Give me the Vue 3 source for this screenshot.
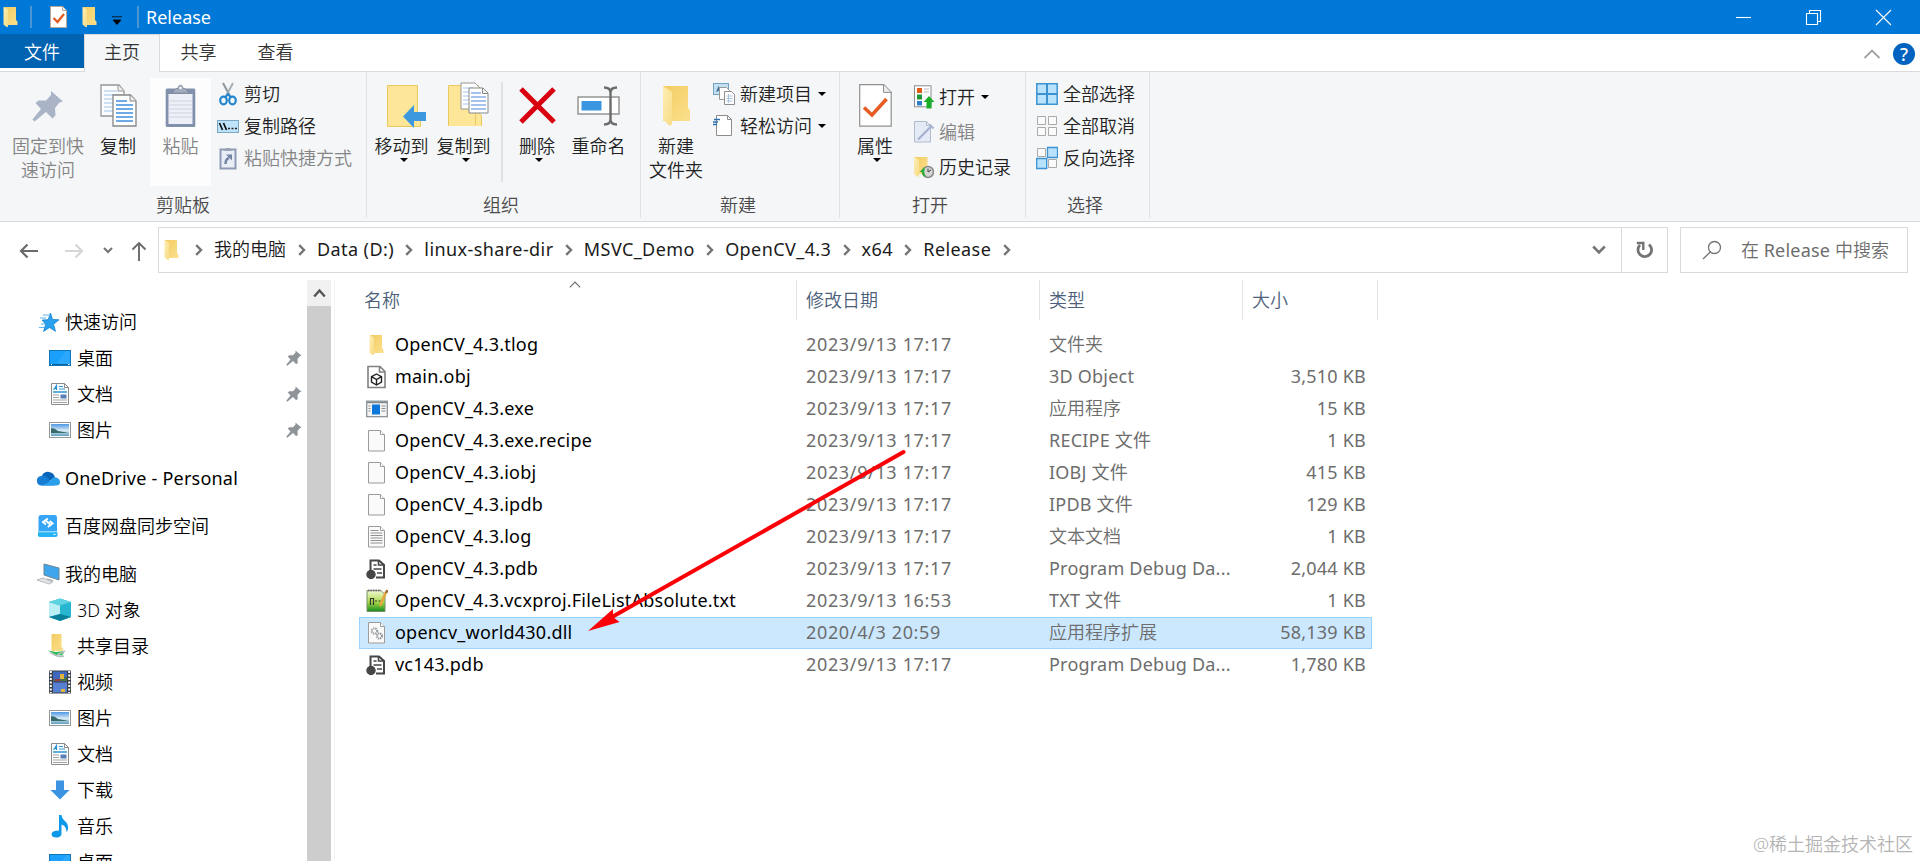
<script setup>
const tabs = ['主页', '共享', '查看']

const clipboardActions = [
  { icon: 'cut', label: '剪切' },
  { icon: 'path', label: '复制路径' },
  { icon: 'shortcut', label: '粘贴快捷方式', disabled: true },
]

const newActions = [
  { icon: 'new-item', label: '新建项目', menu: true },
  { icon: 'easy', label: '轻松访问', menu: true },
]

const openActions = [
  { icon: 'open', label: '打开', menu: true },
  { icon: 'edit', label: '编辑', disabled: true },
  { icon: 'history', label: '历史记录' },
]

const selectActions = [
  { icon: 'select-all', label: '全部选择' },
  { icon: 'select-none', label: '全部取消' },
  { icon: 'select-invert', label: '反向选择' },
]

const crumbs = ['我的电脑', 'Data (D:)', 'linux-share-dir', 'MSVC_Demo', 'OpenCV_4.3', 'x64', 'Release']

const tree = [
  { icon: 'star', label: '快速访问', root: true },
  { icon: 'desktop', label: '桌面', pinned: true },
  { icon: 'document', label: '文档', pinned: true },
  { icon: 'picture', label: '图片', pinned: true },
  { icon: 'onedrive', label: 'OneDrive - Personal', root: true, latin: true },
  { icon: 'netdisk', label: '百度网盘同步空间', root: true },
  { icon: 'computer', label: '我的电脑', root: true },
  { icon: 'cube', label: '3D 对象' },
  { icon: 'share', label: '共享目录' },
  { icon: 'video', label: '视频' },
  { icon: 'picture', label: '图片' },
  { icon: 'document', label: '文档' },
  { icon: 'download', label: '下载' },
  { icon: 'music', label: '音乐' },
  { icon: 'desktop', label: '桌面' },
]

const files = [
  { icon: 'folder', name: 'OpenCV_4.3.tlog', date: '2023/9/13 17:17', type: '文件夹', size: '' },
  { icon: 'obj', name: 'main.obj', date: '2023/9/13 17:17', type: '3D Object', size: '3,510 KB' },
  { icon: 'exe', name: 'OpenCV_4.3.exe', date: '2023/9/13 17:17', type: '应用程序', size: '15 KB' },
  { icon: 'file', name: 'OpenCV_4.3.exe.recipe', date: '2023/9/13 17:17', type: 'RECIPE 文件', size: '1 KB' },
  { icon: 'file', name: 'OpenCV_4.3.iobj', date: '2023/9/13 17:17', type: 'IOBJ 文件', size: '415 KB' },
  { icon: 'file', name: 'OpenCV_4.3.ipdb', date: '2023/9/13 17:17', type: 'IPDB 文件', size: '129 KB' },
  { icon: 'log', name: 'OpenCV_4.3.log', date: '2023/9/13 17:17', type: '文本文档', size: '1 KB' },
  { icon: 'pdb', name: 'OpenCV_4.3.pdb', date: '2023/9/13 17:17', type: 'Program Debug Da...', size: '2,044 KB' },
  { icon: 'txt', name: 'OpenCV_4.3.vcxproj.FileListAbsolute.txt', date: '2023/9/13 16:53', type: 'TXT 文件', size: '1 KB' },
  { icon: 'dll', name: 'opencv_world430.dll', date: '2020/4/3 20:59', type: '应用程序扩展', size: '58,139 KB', selected: true },
  { icon: 'pdb', name: 'vc143.pdb', date: '2023/9/13 17:17', type: 'Program Debug Da...', size: '1,780 KB' },
]
</script>

<template>
  <div class="explorer">
    <!-- icon sprite -->
    <svg class="sprite" width="0" height="0">
      <defs>
        <linearGradient id="g-folder" x1="0" y1="0" x2="1" y2="1">
          <stop offset="0" stop-color="#f3cc62" /><stop offset="1" stop-color="#fbe08d" />
        </linearGradient>
        <linearGradient id="g-flap" x1="0" y1="0" x2="1" y2="1">
          <stop offset="0" stop-color="#fdeeb4" /><stop offset="1" stop-color="#f8dc86" />
        </linearGradient>
        <linearGradient id="g-sky" x1="0" y1="0" x2="0" y2="1">
          <stop offset="0" stop-color="#4f97e6" /><stop offset="0.55" stop-color="#d9ecf4" /><stop offset="1" stop-color="#5d9dbd" />
        </linearGradient>
        <linearGradient id="g-green" x1="0" y1="0" x2="0" y2="1">
          <stop offset="0" stop-color="#f4f9d8" /><stop offset="0.55" stop-color="#a9d94a" /><stop offset="1" stop-color="#128a1c" />
        </linearGradient>
      </defs>
      <symbol id="folder" viewBox="0 0 22 22">
        <path d="M4 1h12v13l1.500 1.500v3.500H4z" fill="url(#g-folder)" />
        <path d="M3.500 1l4.500 2.500v17.500l-1.500 0-3-2.500z" fill="url(#g-flap)" />
      </symbol>
      <symbol id="check-doc" viewBox="0 0 17 22">
        <path d="M.5.5h12l4 4v17H.5z" fill="#fff" stroke="#b9a79a" />
        <path d="M12.500.5v4h4" fill="#eee" stroke="#b9a79a" />
        <path d="M3.500 12l4 4 6.500-8" fill="none" stroke="#e2581f" stroke-width="2.200" />
      </symbol>
      <symbol id="pushpin" viewBox="0 0 32 32">
        <path d="M19 1l12 10.500-3.500 1-4.500 5.500.5 7.500-3 3-6.500-6.500L2.500 31.500.5 29.500 9 19 3.500 13l3-2.500 7.500 0L19 5z" fill="currentColor" />
      </symbol>
      <symbol id="copy" viewBox="0 0 37 43">
        <path d="M1 1h18l5 6v25H1z" fill="#fbfcfe" stroke="#969696" stroke-width="1.300" />
        <path d="M4 7h13M4 11h17M4 15h17M4 19h9M4 23h9M4 27h9" stroke="#9fc1e6" stroke-width="1.200" />
        <path d="M18 1v6h6" fill="#eee" stroke="#969696" />
        <path d="M13 11h17.500l5.500 6v25H13z" fill="#fff" stroke="#868686" stroke-width="1.300" />
        <path d="M30 11v6h6" fill="#eee" stroke="#868686" />
        <path d="M16 17h11M16 21h17M16 25h17M16 29h17M16 33h17M16 37h17" stroke="#3f8ede" stroke-width="1.300" />
      </symbol>
      <symbol id="paste" viewBox="0 0 31 44">
        <rect x=".7" y="4.500" width="29.600" height="38.500" rx="1.500" fill="#8291ab" />
        <rect x="3.500" y="10" width="24" height="30" fill="#edf0f7" />
        <path d="M4 17h23M4 21h23M4 25h23M4 29h23M4 33h23" stroke="#cdd3e2" />
        <path d="M7 9l4-4.500h2c0-4.500 5-4.500 5 0h2L24 9z" fill="#a3adbd" stroke="#7f8a9b" stroke-width=".8" />
        <circle cx="15.500" cy="4" r="1.200" fill="#fff" />
      </symbol>
      <symbol id="cut" viewBox="0 0 22 24">
        <path d="M6 1l7.500 14" stroke="#8f979e" stroke-width="2" />
        <path d="M16 1L8.500 15" stroke="#a8b0b6" stroke-width="2" />
        <ellipse cx="6.500" cy="18.500" rx="3.300" ry="3.800" fill="none" stroke="#2387cc" stroke-width="2.200" />
        <ellipse cx="15.500" cy="18.500" rx="3.300" ry="3.800" fill="none" stroke="#2387cc" stroke-width="2.200" />
        <path d="M8 16l3-4 3 4" fill="none" stroke="#2387cc" stroke-width="2" />
      </symbol>
      <symbol id="path" viewBox="0 0 22 24">
        <rect x=".5" y="6.500" width="21" height="12" fill="#bfe3fb" stroke="#7ba6c4" />
        <path d="M2.500 9l3 7M6.500 9l3 7" stroke="#111" stroke-width="1.700" />
        <path d="M11 14.500h2M14.500 14.500h2M18 14.500h2" stroke="#222" stroke-width="1.500" />
      </symbol>
      <symbol id="shortcut" viewBox="0 0 22 24">
        <rect x="3.500" y="3.500" width="15" height="19" fill="#e8edf6" stroke="#8f9bb3" stroke-width="2" />
        <path d="M7 5l2-3h4l2 3z" fill="#9aa4b5" />
        <path d="M8.500 18q0-5 3.500-6" fill="none" stroke="#7184a3" stroke-width="2.500" />
        <path d="M9 8.500h6v6z" fill="#7184a3" />
      </symbol>
      <symbol id="move-to" viewBox="0 0 42 44">
        <path d="M3.500 1.500h30v27l3 3v11h-33z" fill="#fde698" stroke="#ecc95e" />
        <path d="M19 32.500L30 21v7h12v9H30v7z" fill="#3e98de" />
      </symbol>
      <symbol id="copy-to" viewBox="0 0 42 44">
        <path d="M1.500 3.500h30v27l3 3v11h-33z" fill="#fde698" stroke="#ecc95e" />
        <path d="M28.500 31v12" stroke="#ecc95e" />
        <path d="M14 1h14l5 5v21H14z" fill="#fff" stroke="#969696" />
        <path d="M16 6h10M16 10h10M16 14h10M16 18h10M16 22h10" stroke="#a4c4ec" />
        <path d="M22 6h14l5 5v20H22z" fill="#fff" stroke="#888" />
        <path d="M35.500 6v5.500H41" fill="#eee" stroke="#888" />
        <path d="M24 11h10M24 15h15M24 19h15M24 23h15M24 27h15" stroke="#4a86d8" stroke-width="1.200" />
      </symbol>
      <symbol id="delete" viewBox="0 0 37 44">
        <path d="M2 5l33 33M35 5L2 38" stroke="#d9000f" stroke-width="5" />
      </symbol>
      <symbol id="rename" viewBox="0 0 43 44">
        <rect x="1" y="13" width="41" height="17" fill="#fff" stroke="#8e8e8e" stroke-width="1.400" />
        <rect x="4.500" y="17" width="20" height="9.500" fill="#3a96e0" />
        <path d="M27 3.500q6.500 0 6.500 5v27q0 5-6.500 5M40 3.500q-6.500 0-6.500 5M33.500 35.500q0 5 6.500 5" fill="none" stroke="#6c6c6c" stroke-width="2.400" />
      </symbol>
      <symbol id="big-folder" viewBox="0 0 28 43">
        <path d="M1 2h25v22l2 2v11H1z" fill="url(#g-folder)" />
        <path d="M1 2l9 6v32l-2 2-7-6z" fill="url(#g-flap)" />
      </symbol>
      <symbol id="new-item" viewBox="0 0 22 24">
        <rect x=".5" y="1.500" width="15" height="11" fill="#c4dff2" stroke="#70a3c4" />
        <path d="M3 10l2.500-6L8 8z" fill="#41729a" />
        <path d="M6.500 5.500h7l3 3v9h-10z" fill="#fff" stroke="#9a9a9a" />
        <path d="M11.500 9.500h7l3 3v10h-10z" fill="#fff" stroke="#8d8d8d" />
        <path d="M13.500 14h6M13.500 16.500h6M13.500 19h6M15.500 12v9" stroke="#9ab8da" stroke-width=".8" />
      </symbol>
      <symbol id="easy" viewBox="0 0 22 24">
        <path d="M3.500 1.500h11l4 4v16h-15z" fill="#fff" stroke="#8c8c8c" />
        <path d="M14.500 1.500v4h4" fill="none" stroke="#8c8c8c" />
        <path d="M1 5.500h6M0 8h5M-1 10.500h5" stroke="#2c6fae" stroke-width="1.500" />
      </symbol>
      <symbol id="properties" viewBox="0 0 33 43">
        <path d="M.7.7h24l7.500 7.500v34H.7z" fill="#fff" stroke="#909090" stroke-width="1.200" />
        <path d="M24.500.7v7.700h7.700" fill="#ececec" stroke="#909090" />
        <path d="M5 23.500l8 7.500 14.500-16" fill="none" stroke="#e65c24" stroke-width="3.600" />
      </symbol>
      <symbol id="open" viewBox="0 0 22 24">
        <rect x="2.500" y=".8" width="16.500" height="21" fill="#fff" stroke="#8d8d8d" />
        <path d="M5 3h5v5H5z" fill="#df5a17" /><path d="M5 9.500h5v5H5z" fill="#21963a" /><path d="M5 16h5v4.500H5z" fill="#2d7fca" />
        <path d="M12 4h5M12 7h5" stroke="#bbb" />
        <path d="M17 11l5.500 6h-3v6.500h-5V17h-3z" fill="#18ae27" />
      </symbol>
      <symbol id="edit" viewBox="0 0 22 24">
        <path d="M2.500 1.500h12l4 4v16.500h-16z" fill="#e4eaf6" stroke="#b2bccd" />
        <path d="M14.500 1.500v4h4" fill="none" stroke="#b2bccd" />
        <path d="M6 19.500L19 6.500" stroke="#a3b0cb" stroke-width="2.200" />
        <path d="M17.500 4.500l4 4" stroke="#a6b3cc" stroke-width="2" />
      </symbol>
      <symbol id="history" viewBox="0 0 22 24">
        <path d="M2.500 2h13v17h-13z" fill="url(#g-folder)" />
        <path d="M2.500 2l4.500 3v17l-4.500-2z" fill="url(#g-flap)" />
        <circle cx="16" cy="17" r="5.500" fill="#d4d4d4" stroke="#8b8b8b" stroke-width="1.500" />
        <path d="M16 13.500V17l3-2" fill="none" stroke="#444" />
        <path d="M7.500 17l5-5v3q-1 3.500 2 7-5-1-4.500-5z" fill="#2bac38" />
      </symbol>
      <symbol id="select-all" viewBox="0 0 22 24">
        <path d="M.8 1.800h20.400v20.400H.8z" fill="#b9e2fc" stroke="#3d93d2" stroke-width="1.500" />
        <path d="M11 2v20M1 12h20" stroke="#3d93d2" stroke-width="2" />
      </symbol>
      <symbol id="select-none" viewBox="0 0 22 24">
        <path d="M1.500 2.500h8v8h-8zM12.500 2.500h8v8h-8zM1.500 13.500h8v8h-8zM12.500 13.500h8v8h-8z" fill="#fbfbfb" stroke="#aaa" />
      </symbol>
      <symbol id="select-invert" viewBox="0 0 22 24">
        <path d="M1.500 2.500h8v8h-8zM12.500 13.500h8v8h-8z" fill="#fbfbfb" stroke="#aaa" />
        <path d="M11.500 1.500h10v10h-10zM.7 12.500h10v10H.7z" fill="#b9e2fc" stroke="#3d93d2" stroke-width="1.300" />
      </symbol>
      <symbol id="star" viewBox="0 0 24 24">
        <path d="M14.500 3l2 6.500 6.500.3-5.500 4.500 2 7-6-3.800-6 4 2.200-7-3.500-4.500 6-.3z" fill="#2aa0ee" stroke="#1382cc" stroke-width=".8" />
        <path d="M7 5h6M4 8h6M5 14h4M3 17.500h5" stroke="#5bb6ef" stroke-width="1" />
      </symbol>
      <symbol id="desktop" viewBox="0 0 24 24">
        <rect x="1.500" y="4.500" width="21" height="15" fill="#1ba1fb" stroke="#0f76b9" />
        <path d="M2 18.500h20" stroke="#0c639d" stroke-width="1.200" />
        <path d="M3 18.500h1M20 18.500h1.500" stroke="#fff" />
        <path d="M9 18L18 5h4v13z" fill="#3cb0ff" opacity=".5" />
      </symbol>
      <symbol id="document" viewBox="0 0 24 24">
        <path d="M3.500 1.500h13l4 4v17h-17z" fill="#fff" stroke="#8b8b8b" />
        <path d="M16.500 1.500v4h4" fill="none" stroke="#8b8b8b" />
        <path d="M5.500 8L8.500 3.500V8M6.500 6.500h2M11 4.500h4M11 7h6" stroke="#2a93d3" stroke-width="1.200" fill="none" />
        <path d="M5 10h14" stroke="#2a93d3" stroke-width="1.500" />
        <path d="M5 13h6M5 15.500h6M5 18h14M5 20.500h14" stroke="#a0a0a0" />
        <path d="M12.500 12.500h6v4h-6z" fill="#587fb8" />
      </symbol>
      <symbol id="picture" viewBox="0 0 24 24">
        <rect x="1.500" y="4.500" width="21" height="15" fill="#fff" stroke="#8f979d" />
        <rect x="3" y="6" width="18" height="12" fill="url(#g-sky)" />
        <path d="M3 10q4 0 7 3l11 2H3z" fill="#3a6b6a" />
      </symbol>
      <symbol id="onedrive" viewBox="0 0 24 24">
        <path d="M6 9.500a7 7 0 0 1 13 2l-8 5z" fill="#0a64b8" />
        <path d="M5 10q5-1 8.500 4l5 5.500H5a4.800 4.800 0 0 1 0-9.500z" fill="#167dd4" />
        <path d="M5 19.500q8-2 11.500-7.500a5 5 0 0 1 7.500 4q0 3.500-4 3.500z" fill="#2ba0ea" />
      </symbol>
      <symbol id="netdisk" viewBox="0 0 24 24">
        <rect x="2.500" y="1" width="18.500" height="20" rx="2.500" fill="#36a5f6" />
        <rect x="2" y="17" width="19.500" height="6" rx="1.800" fill="#25b3f3" />
        <path d="M2.500 17.800h18.500" stroke="#b9e8ff" />
        <path d="M11.800 4.500L7 8l3 2.500M9.500 6.300l5 4.400M11.800 13l4.800-3.500-3-2.500" fill="none" stroke="#fff" stroke-width="1.900" />
        <path d="M17.500 20.500h2" stroke="#fff" />
      </symbol>
      <symbol id="computer" viewBox="0 0 24 24">
        <path d="M8 2l15 4v12L8 13z" fill="#3ea6ec" stroke="#6d8596" />
        <path d="M11 17l5 1.500-3 1.500" fill="none" stroke="#b5bcc2" stroke-width="1.500" />
        <path d="M1 18l6-2 10 4-4 2z" fill="#e2e5e8" stroke="#a9afb5" stroke-width=".8" />
      </symbol>
      <symbol id="cube" viewBox="0 0 24 24">
        <path d="M1 4l11-3.500L23 4v15l-11 4L1 19z" fill="#28b5cf" />
        <path d="M1 4l11 3.500V16L1 19z" fill="#baf0f5" />
        <path d="M1 4l11-3.500L23 4 12 7.500z" fill="#5dd2e1" />
        <path d="M1 19l11-3 11 3-11 4z" fill="#087f9b" />
      </symbol>
      <symbol id="share" viewBox="0 0 24 24">
        <path d="M3.500 0h10v13l1.500 1v3H3.500z" fill="url(#g-folder)" />
        <path d="M0 16.500l8 1.500 9-1-3 4.500-6-.5z" fill="#2dbd55" />
        <path d="M2 18q7 6 14 4M9 21l8-4" fill="none" stroke="#b4bfc2" stroke-width="1.500" />
      </symbol>
      <symbol id="video" viewBox="0 0 24 24">
        <rect x="1" y=".5" width="22" height="23" fill="#3a3e46" />
        <rect x="5" y="1.500" width="14" height="10" fill="#3f67bd" />
        <rect x="5" y="12.500" width="14" height="10" fill="#5680d2" />
        <path d="M2.800 1v22M21.200 1v22" stroke="#fff" stroke-width="2" stroke-dasharray="2 1.500" />
        <path d="M5 9q5 3 9 0l5-2v4H5z" fill="#49723d" />
        <path d="M12 4h4v5h-4zM13 19h4v3h-4z" fill="#e2b53a" />
        <path d="M7 10h5" stroke="#b82b23" stroke-width="1.500" />
      </symbol>
      <symbol id="download" viewBox="0 0 24 24">
        <path d="M8 2.500h8V12h5.500L12 21.500 2.500 12H8z" fill="#3b93e2" />
      </symbol>
      <symbol id="music" viewBox="0 0 24 24">
        <path d="M11 1h2.500q.5 4 4.500 7 4 4.500.5 10.500 0-6.500-5-8v9q0 3.500-4 4-5.500.5-6-3 0-4 7.500-4z" fill="#0e98ea" />
      </symbol>
      <symbol id="obj" viewBox="0 0 22 24">
        <path d="M2 1.500h12l5 5v16H2z" fill="#fff" stroke="#818181" stroke-width="1.600" />
        <path d="M13.500 1.500V7H19" fill="none" stroke="#818181" stroke-width="1.600" />
        <path d="M10.500 9l5 2.700v5.500L10.500 20l-5-2.800v-5.500zM5.500 11.700l5 2.800 5-2.800M10.500 14.500V20" fill="none" stroke="#222" stroke-width="1.400" />
      </symbol>
      <symbol id="exe" viewBox="0 0 22 24">
        <rect x=".7" y="4.200" width="20.600" height="15.500" fill="#f5f5f5" stroke="#838a90" stroke-width="1.200" />
        <path d="M1 5.500h20" stroke="#838a90" stroke-width="1.500" />
        <rect x="6" y="7.500" width="8" height="10" fill="#0d76d8" />
        <path d="M2.500 9h2M2.500 11.500h2M2.500 14h2M15.500 9h4M15.500 11.500h4M15.500 14h4" stroke="#8b8b8b" />
      </symbol>
      <symbol id="file" viewBox="0 0 22 24">
        <path d="M2.500 1.500h12l4 4v16.500h-16z" fill="#fafafa" stroke="#9b9b9b" />
        <path d="M14.500 1.500v4h4" fill="#fff" stroke="#9b9b9b" />
      </symbol>
      <symbol id="log" viewBox="0 0 22 24">
        <path d="M2.500 1.500h12l4 4v16.500h-16z" fill="#fafafa" stroke="#9b9b9b" />
        <path d="M14.500 1.500v4h4" fill="#fff" stroke="#9b9b9b" />
        <path d="M4.500 5.500h8M4.500 8h12M4.500 10.500h12M4.500 13h12M4.500 15.500h12M4.500 18h12" stroke="#909090" />
      </symbol>
      <symbol id="pdb" viewBox="0 0 22 24">
        <path d="M4.500 14V3.500H13L18 8v12.500h-8" fill="#fff" stroke="#464646" stroke-width="2" />
        <path d="M12.500 3.500V8H18M7.500 8h3M7.500 12h8M11 16h5" fill="none" stroke="#464646" stroke-width="1.600" />
        <circle cx="5" cy="17.500" r="4.700" fill="#464646" />
      </symbol>
      <symbol id="txt" viewBox="0 0 22 24">
        <path d="M1 1.500h14l4 4v17H1z" fill="url(#g-green)" stroke="#78906a" />
        <path d="M2 1.500h13" stroke="#777" stroke-dasharray="1.500 1" stroke-width="2" />
        <path d="M4.500 16V9.500h3V16M9 12h2M12.500 12h2" fill="none" stroke="#333" stroke-width="1.200" />
        <path d="M14 17L20 3" stroke="#e4a53b" stroke-width="2.500" />
        <path d="M20 4l1.500-3" stroke="#9b6a3d" stroke-width="2.500" />
      </symbol>
      <symbol id="dll" viewBox="0 0 22 24">
        <path d="M2.500 1.500h12l4 4v16.500h-16z" fill="#fafafa" stroke="#9b9b9b" />
        <path d="M14.500 1.500v4h4" fill="#fff" stroke="#9b9b9b" />
        <circle cx="8.500" cy="10" r="2.700" fill="none" stroke="#9aa1a6" stroke-width="2.200" stroke-dasharray="1.400 .8" />
        <circle cx="13.500" cy="15" r="2.500" fill="none" stroke="#8e959a" stroke-width="2" stroke-dasharray="1.300 .7" />
      </symbol>
      <symbol id="chevron" viewBox="0 0 8 12">
        <path d="M1.200 1.200L6 6l-4.800 4.800" fill="none" stroke="#757575" stroke-width="2.400" />
      </symbol>
    </svg>

    <header class="titlebar">
      <svg class="tb-folder" width="22" height="22"><use href="#folder" /></svg>
      <i class="tb-sep"></i>
      <svg class="tb-check" width="17" height="22"><use href="#check-doc" /></svg>
      <svg class="tb-folder2" width="22" height="22"><use href="#folder" /></svg>
      <svg class="tb-caret" width="10" height="9" viewBox="0 0 10 9"><path d="M0 .8h10M1 4h8L5 8.500z" fill="#000" stroke="#000" stroke-width=".8" /></svg>
      <i class="tb-sep second"></i>
      <span class="title">Release</span>
      <div class="controls">
        <svg width="17" height="17" viewBox="0 0 17 17"><path d="M1 8.500h15" /></svg>
        <svg width="17" height="17" viewBox="0 0 17 17"><path d="M1.500 4.500h11v11h-11zM4.500 4.500v-3h11v11h-3" /></svg>
        <svg width="17" height="17" viewBox="0 0 17 17"><path d="M1 1l15 15M16 1L1 16" /></svg>
      </div>
    </header>

    <nav class="tabs">
      <span class="tab file-tab">文件</span>
      <span v-for="(t, i) in tabs" :key="t" class="tab" :class="{ active: i === 0 }">{{ t }}</span>
      <div class="tab-tools">
        <svg width="18" height="10" viewBox="0 0 18 10"><path d="M1.500 9L9 1.500 16.500 9" fill="none" stroke="#a2a2a2" stroke-width="1.800" /></svg>
        <span class="help">?</span>
      </div>
    </nav>

    <section class="ribbon">
      <div class="group g-clipboard">
        <div class="group-body">
          <div class="big pin-btn disabled">
            <span class="big-icon"><svg class="pin-icon" width="32" height="32"><use href="#pushpin" /></svg></span>
            <span>固定到快<br>速访问</span>
          </div>
          <div class="big copy-btn">
            <span class="big-icon"><svg width="37" height="43"><use href="#copy" /></svg></span>
            <span>复制</span>
          </div>
          <div class="big paste-btn disabled">
            <span class="big-icon"><svg width="31" height="44"><use href="#paste" /></svg></span>
            <span>粘贴</span>
          </div>
          <div class="small-list">
            <div v-for="a in clipboardActions" :key="a.label" class="small" :class="{ disabled: a.disabled }">
              <svg width="22" height="24"><use :href="'#' + a.icon" /></svg>
              <span>{{ a.label }}</span>
            </div>
          </div>
        </div>
        <p class="group-name">剪贴板</p>
      </div>

      <div class="group g-organize">
        <div class="group-body">
          <div class="big move-btn">
            <span class="big-icon"><svg width="42" height="44"><use href="#move-to" /></svg></span>
            <span>移动到</span>
            <i class="caret"></i>
          </div>
          <div class="big copyto-btn">
            <span class="big-icon"><svg width="42" height="44"><use href="#copy-to" /></svg></span>
            <span>复制到</span>
            <i class="caret"></i>
          </div>
          <i class="divider"></i>
          <div class="big delete-btn">
            <span class="big-icon"><svg width="37" height="44"><use href="#delete" /></svg></span>
            <span>删除</span>
            <i class="caret"></i>
          </div>
          <div class="big rename-btn">
            <span class="big-icon"><svg width="43" height="44"><use href="#rename" /></svg></span>
            <span>重命名</span>
          </div>
        </div>
        <p class="group-name">组织</p>
      </div>

      <div class="group g-new">
        <div class="group-body">
          <div class="big newfolder-btn">
            <span class="big-icon"><svg width="28" height="43"><use href="#big-folder" /></svg></span>
            <span>新建<br>文件夹</span>
          </div>
          <div class="small-list">
            <div v-for="a in newActions" :key="a.label" class="small">
              <svg width="22" height="24"><use :href="'#' + a.icon" /></svg>
              <span>{{ a.label }}</span>
              <i class="caret"></i>
            </div>
          </div>
        </div>
        <p class="group-name">新建</p>
      </div>

      <div class="group g-open">
        <div class="group-body">
          <div class="big props-btn">
            <span class="big-icon"><svg width="33" height="43"><use href="#properties" /></svg></span>
            <span>属性</span>
            <i class="caret"></i>
          </div>
          <div class="small-list loose">
            <div v-for="a in openActions" :key="a.label" class="small" :class="{ disabled: a.disabled }">
              <svg width="22" height="24"><use :href="'#' + a.icon" /></svg>
              <span>{{ a.label }}</span>
              <i v-if="a.menu" class="caret"></i>
            </div>
          </div>
        </div>
        <p class="group-name">打开</p>
      </div>

      <div class="group g-select">
        <div class="group-body">
          <div class="small-list">
            <div v-for="a in selectActions" :key="a.label" class="small">
              <svg width="22" height="24"><use :href="'#' + a.icon" /></svg>
              <span>{{ a.label }}</span>
            </div>
          </div>
        </div>
        <p class="group-name">选择</p>
      </div>
    </section>

    <section class="addressbar">
      <div class="nav-buttons">
        <svg width="20" height="16" viewBox="0 0 20 16"><path d="M19 8H2M8.500 1.500L2 8l6.500 6.500" fill="none" stroke="#6a6a6a" stroke-width="2.200" /></svg>
        <svg class="fwd" width="20" height="16" viewBox="0 0 20 16"><path d="M1 8h17M11.500 1.500L18 8l-6.500 6.500" fill="none" stroke="#d6d6d6" stroke-width="2.200" /></svg>
        <svg class="recent" width="10" height="7" viewBox="0 0 10 7"><path d="M1 1l4 4 4-4" fill="none" stroke="#777" stroke-width="2.200" /></svg>
        <svg class="up" width="16" height="20" viewBox="0 0 16 20"><path d="M8 20V2M1.500 8.500L8 2l6.500 6.500" fill="none" stroke="#6a6a6a" stroke-width="1.900" /></svg>
      </div>
      <div class="path-box">
        <svg class="path-folder" width="22" height="22"><use href="#folder" /></svg>
        <svg width="8" height="12"><use href="#chevron" /></svg>
        <template v-for="(c, i) in crumbs" :key="c">
          <span class="crumb" :class="{ latin: i > 0 }">{{ c }}</span>
          <svg width="8" height="12"><use href="#chevron" /></svg>
        </template>
        <svg class="drop" width="14" height="10" viewBox="0 0 14 10"><path d="M1.200 1.500L7 7.500l5.800-6" fill="none" stroke="#757575" stroke-width="2.600" /></svg>
        <div class="refresh">
          <svg width="18" height="18" viewBox="0 0 18 18">
            <path d="M13 3.500a6.800 6.800 0 1 1-9 .5" fill="none" stroke="#737373" stroke-width="2.800" />
            <path d="M.8 2h6.500v7" fill="none" stroke="#737373" stroke-width="2.400" />
          </svg>
        </div>
      </div>
      <div class="search">
        <svg width="20" height="20" viewBox="0 0 20 20"><circle cx="12.500" cy="7.500" r="6" fill="none" stroke="#737373" stroke-width="1.300" /><path d="M8.300 12L1 19" stroke="#737373" stroke-width="1.300" /></svg>
        <span>在 <span class="latin">Release</span> 中搜索</span>
      </div>
    </section>

    <main class="content">
      <aside class="sidebar">
        <ul class="tree">
          <li v-for="(n, i) in tree" :key="i" :class="{ root: n.root }">
            <svg class="node-icon" width="24" height="24"><use :href="'#' + n.icon" /></svg>
            <span :class="{ latin: n.latin }">{{ n.label }}</span>
            <svg v-if="n.pinned" class="node-pin" width="16" height="16"><use href="#pushpin" /></svg>
          </li>
        </ul>
        <div class="scrollbar">
          <div class="scroll-up">
            <svg width="13" height="10" viewBox="0 0 13 10"><path d="M1.200 8.500l5.300-6 5.300 6" fill="none" stroke="#555" stroke-width="2.400" /></svg>
          </div>
          <div class="thumb"></div>
        </div>
      </aside>

      <section class="listing">
        <div class="columns">
          <span class="col-name">名称<svg class="sort" width="12" height="7" viewBox="0 0 12 7"><path d="M.8 6.300L6 1l5.200 5.300" fill="none" stroke="#6a6a6a" stroke-width="1.100" /></svg></span>
          <span>修改日期</span>
          <span>类型</span>
          <span>大小</span>
        </div>
        <div class="rows">
          <div v-for="f in files" :key="f.name" class="row" :class="{ selected: f.selected }">
            <svg width="22" height="24"><use :href="'#' + f.icon" /></svg>
            <span class="name latin">{{ f.name }}</span>
            <span class="date latin">{{ f.date }}</span>
            <span :class="{ latin: /[a-z]/i.test(f.type) }">{{ f.type }}</span>
            <span class="size latin">{{ f.size }}</span>
          </div>
        </div>
      </section>
    </main>

    <!-- red annotation arrow over the list -->
    <svg class="annotation" width="330" height="190" viewBox="0 0 330 190">
      <path d="M317.500 5L26 170" stroke="#fb0007" stroke-width="4" stroke-linecap="round" />
      <path d="M2 184l25-22v8l6.500 5z" fill="#fb0007" />
    </svg>
    <span class="watermark">@稀土掘金技术社区</span>
  </div>
</template>

<style>
body {
  margin: 0;
  overflow: hidden;
}
</style>

<style scoped>
.explorer {
  position: relative;
  width: 1920px;
  height: 861px;
  overflow: hidden;
  display: flex;
  flex-direction: column;
  background: #fff;
  color: #111;
  font-family: "Noto Sans", "Noto Sans CJK SC", sans-serif;
  font-size: 18px;
  font-weight: 350;
  line-height: 24px;
  white-space: nowrap;
}

.explorer * {
  box-sizing: border-box;
}

.latin {
  font-weight: 400;
  letter-spacing: 0.22px;
}

.sprite {
  position: absolute;
}

svg {
  display: block;
  flex: none;
}

/* title bar */
.titlebar {
  flex: none;
  height: 34px;
  display: flex;
  align-items: center;
  background: #0078d7;
  color: #fff;
}

.tb-folder {
  width: 22px;
}

.tb-sep {
  width: 2px;
  height: 22px;
  margin-left: 8px;
  background: #4b96d2;
}

.tb-check {
  margin-left: 18px;
}

.tb-folder2 {
  margin-left: 12px;
}

.tb-caret {
  margin: 6px 0 0 11px;
}

.tb-sep.second {
  margin-left: 15px;
}

.title {
  margin-left: 7px;
  font-weight: 400;
}

.controls {
  margin: 0 28px 0 auto;
  display: flex;
  gap: 53px;
}

.controls path {
  fill: none;
  stroke: #fff;
  stroke-width: 1.1;
}

/* tabs */
.tabs {
  flex: none;
  height: 38px;
  display: flex;
  border-bottom: 1px solid #d8dadc;
}

.tab {
  width: 77px;
  height: 34px;
  line-height: 36px;
  text-align: center;
  color: #333;
}

.tab.file-tab {
  width: 84px;
  background: #0063b1;
  color: #fff;
}

.tab.active {
  width: 76px;
  height: 38px;
  line-height: 34px;
  background: #f4f6f8;
  border: 1px solid #d8dadc;
  border-bottom: 0;
}

.tab-tools {
  margin: 2px 5px 0 auto;
  display: flex;
  align-items: center;
  gap: 12px;
}

.help {
  width: 22px;
  height: 22px;
  border-radius: 50%;
  background: #0063c0;
  color: #fff;
  font-size: 18px;
  font-weight: 500;
  line-height: 22px;
  text-align: center;
}

/* ribbon */
.ribbon {
  flex: none;
  height: 150px;
  display: flex;
  background: #f4f6f8;
  border-bottom: 1px solid #d8dadc;
}

.group {
  height: 146px;
  display: flex;
  flex-direction: column;
  border-right: 1px solid #e0e2e4;
}

.g-clipboard { width: 367px; }
.g-organize { width: 274px; }
.g-new { width: 199px; }
.g-open { width: 186px; }
.g-select { width: 124px; }

.group-body {
  height: 121px;
  padding-top: 6px;
  display: flex;
}

.group-name {
  margin: 0;
  text-align: center;
  color: #4a4a4a;
}

.g-organize .group-name { padding-right: 5px; }
.g-new .group-name { padding-right: 4px; }
.g-open .group-name { padding-right: 5px; }
.g-select .group-name { padding-right: 5px; }

.big {
  height: 108px;
  padding-top: 6px;
  display: flex;
  flex-direction: column;
  align-items: center;
  text-align: center;
  color: #222;
}

.big-icon {
  height: 50px;
}

.disabled {
  color: #858585;
}

.pin-btn { width: 96px; }
.pin-icon { margin-top: 6px; color: #a9b4c7; }
.copy-btn { width: 44px; }
.paste-btn { width: 61px; margin-left: 10px; background: #fdfdfe; }
.move-btn { width: 59px; margin-left: 5px; }
.copyto-btn { width: 65px; }
.delete-btn { width: 68px; }
.rename-btn { width: 55px; }
.newfolder-btn { width: 62px; margin-left: 4px; }
.props-btn { width: 60px; margin-left: 5px; }
.move-btn svg { margin-left: 6px; }
.copyto-btn svg { margin: -2px 0 0 9px; }
.move-btn .caret,
.copyto-btn .caret,
.delete-btn .caret,
.props-btn .caret { margin-left: 4px; }

.divider {
  width: 2px;
  height: 100px;
  margin: 4px 0 0 5px;
  background: #dfe1e4;
}

.caret {
  width: 0;
  height: 0;
  border: 4px solid transparent;
  border-top-color: #000;
  border-bottom-width: 0;
}

.small-list {
  margin-left: 6px;
}

.g-new .small-list { margin-left: 6px; }
.g-open .small-list { margin-left: 7px; }
.g-select .small-list { margin-left: 10px; }

.small {
  height: 32px;
  display: flex;
  align-items: center;
  gap: 5px;
  color: #222;
}

.small .caret {
  margin-left: 1px;
}

.small.disabled {
  color: #858585;
}

.loose {
  padding-top: 1px;
}

.loose .small {
  height: 35px;
}

/* address bar */
.addressbar {
  flex: none;
  height: 58px;
  padding: 5px 12px 6px 0;
  display: flex;
}

.nav-buttons {
  width: 158px;
  padding-left: 19px;
  display: flex;
  align-items: center;
}

.fwd { margin-left: 25px; }
.recent { margin-left: 19px; }
.up { margin-left: 18px; }

.path-box {
  width: 1510px;
  height: 46px;
  display: flex;
  align-items: center;
  border: 1px solid #d9d9d9;
  color: #1a1a1a;
}

.path-folder {
  margin: 0 12px 0 2px;
}

.crumb {
  padding: 0 12px 2px 11px;
}

.crumb.latin {
  padding-right: 11.3px;
  letter-spacing: 0.42px;
}

.drop {
  margin: 0 15px 0 auto;
}

.refresh {
  width: 46px;
  height: 44px;
  display: flex;
  align-items: center;
  justify-content: center;
  border-left: 1px solid #d9d9d9;
}

.search {
  width: 228px;
  height: 46px;
  margin-left: 12px;
  padding-left: 21px;
  display: flex;
  align-items: center;
  gap: 19px;
  border: 1px solid #d9d9d9;
  color: #6d6d6d;
}

/* navigation tree */
.content {
  flex: 1;
  min-height: 0;
  display: flex;
}

.sidebar {
  width: 335px;
  display: flex;
  justify-content: space-between;
  border-right: 1px solid #f3f3f3;
}

.tree {
  width: 307px;
  margin: 0;
  padding: 24px 0 0;
  list-style: none;
}

.tree li {
  height: 36px;
  padding: 0 5px 0 48px;
  display: flex;
  align-items: center;
  gap: 5px;
  color: #000;
}

.tree li span {
  padding-bottom: 1px;
}

.tree li.root {
  padding-left: 36px;
}

.tree li.root:not(:first-child) {
  margin-top: 12px;
}

.node-pin {
  margin-left: auto;
  color: #8f9499;
}

.scrollbar {
  width: 24px;
  margin-right: 3px;
  display: flex;
  flex-direction: column;
}

.scroll-up {
  height: 26px;
  display: flex;
  align-items: center;
  justify-content: center;
  background: #f0f0f0;
}

.thumb {
  flex: 1;
  background: #cdcdcd;
}

/* file list */
.listing {
  padding-left: 24px;
}

.columns {
  height: 40px;
  display: grid;
  grid-template-columns: 438px 243px 203px 135px;
  color: #4c607a;
  line-height: 40px;
}

.columns span {
  padding-left: 9px;
  border-right: 1px solid #e3e3e3;
}

.columns .col-name {
  position: relative;
  padding-left: 5px;
}

.sort {
  position: absolute;
  left: 210px;
  top: 1px;
}

.rows {
  padding-top: 9px;
}

.row {
  width: 1013px;
  height: 32px;
  padding: 0 6px 0 7px;
  display: grid;
  grid-template-columns: 22px 418px 243px 193px 1fr;
  align-items: center;
  line-height: 30px;
  color: #6d6d6d;
}

.row span {
  padding-bottom: 2px;
}

.row .name {
  padding-left: 7px;
  color: #000;
}

.row .date {
  letter-spacing: 0.65px;
}

.row .size {
  text-align: right;
}

.row.selected {
  background: #cce8ff;
  box-shadow: inset 0 0 0 1px #99d1ff;
}

.annotation {
  position: absolute;
  left: 586px;
  top: 447px;
}

.watermark {
  position: absolute;
  right: 7px;
  bottom: 5px;
  color: #b4b4b4;
}
</style>
